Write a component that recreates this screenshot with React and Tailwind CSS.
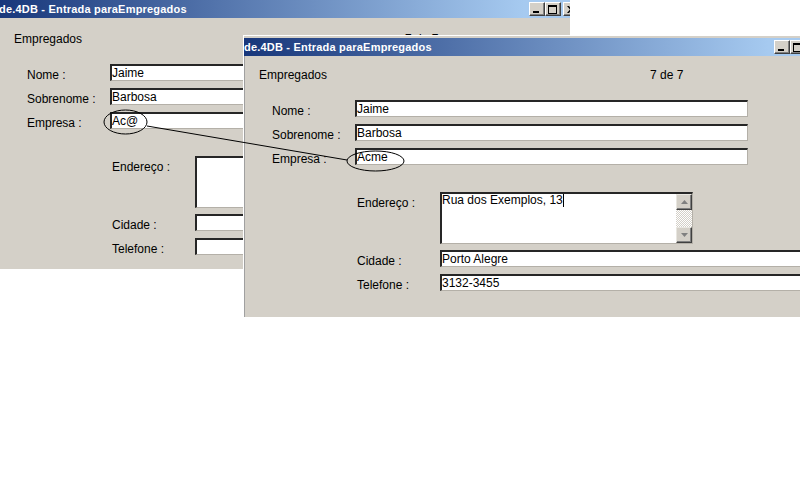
import React from "react";

const fieldBorder =
  "bg-white border-t-2 border-l-2 border-r border-b border-t-[#262626] border-l-[#262626] border-r-[#b4b0a8] border-b-[#b4b0a8]";

function Field({ className = "", children }) {
  return (
    <div className={`h-[17px] ${fieldBorder} ${className}`}>
      <div className="pt-px leading-[13px] whitespace-nowrap overflow-hidden">{children}</div>
    </div>
  );
}

function Row({ label, children, className = "" }) {
  return (
    <div className={`flex items-start h-[17px] ${className}`}>
      <span className="w-[83px] shrink-0 pt-[4px] leading-[14px] whitespace-nowrap">{label}</span>
      {children}
    </div>
  );
}

function TitleButton({ children, className = "" }) {
  return (
    <div
      className={`w-[16px] h-[14px] shrink-0 bg-[#d4d0c8] border border-t-white border-l-white border-r-[#404040] border-b-[#404040] shadow-[inset_-1px_-1px_0_#808080] flex ${className}`}
    >
      {children}
    </div>
  );
}

function TitleBar() {
  return (
    <div className="flex items-center h-[18px] pr-[3px] bg-[linear-gradient(90deg,#18377b_0%,#a6caf0_90%)]">
      <span className="text-[11px] leading-[13px] font-bold tracking-[0.2px] text-white whitespace-nowrap">
        de.4DB - Entrada paraEmpregados
      </span>
      <div className="ml-auto flex">
        <TitleButton className="items-end justify-start pl-[3px] pb-[2px]">
          <div className="w-[6px] h-[2px] bg-black" />
        </TitleButton>
        <TitleButton className="items-center justify-center">
          <div className="w-[9px] h-[9px] border border-black border-t-2 mr-px" />
        </TitleButton>
        <TitleButton className="ml-[2px] items-center justify-center">
          <svg width="8" height="7" viewBox="0 0 8 7">
            <path d="M0 0h2l2 2.5L6 0h2L5 3.5 8 7H6L4 4.5 2 7H0l3-3.5z" fill="#000" />
          </svg>
        </TitleButton>
      </div>
    </div>
  );
}

function ScrollButton({ up }) {
  return (
    <div className="w-[16px] h-[16px] shrink-0 bg-[#d4d0c8] border border-t-[#e8e6e0] border-l-[#e8e6e0] border-r-[#404040] border-b-[#404040] shadow-[inset_-1px_-1px_0_#808080] flex items-center justify-center">
      <svg width="7" height="4" viewBox="0 0 7 4">
        {up ? <path d="M3.5 0L7 4H0z" fill="#808080" /> : <path d="M0 0h7L3.5 4z" fill="#808080" />}
      </svg>
    </div>
  );
}

function TextArea({ text }) {
  return (
    <div className={`w-[253px] h-[52px] flex ${fieldBorder}`}>
      <div className="flex-1 leading-[12px] whitespace-nowrap overflow-hidden">
        {text}
        {text && <span className="inline-block w-px h-[13px] bg-black align-top" />}
      </div>
      {text && (
        <div className="w-[16px] flex flex-col">
          <ScrollButton up />
          <div className="flex-1 bg-[repeating-conic-gradient(#d4d0c8_0_25%,#ffffff_0_50%)] bg-[length:2px_2px]" />
          <ScrollButton />
        </div>
      )}
    </div>
  );
}

function Form({ pt, data }) {
  return (
    <div className={`flex-1 border-l border-[#a0a0a0] ${pt}`}>
      <div className="flex pl-[14px] leading-[14px]">
        <span className="w-[391px]">Empregados</span>
        <span>7 de 7</span>
      </div>

      <div className="mt-[18px] pl-[27px] flex flex-col gap-[7px]">
        <Row label="Nome :">
          <Field className="w-[393px]">{data.nome}</Field>
        </Row>
        <Row label="Sobrenome :">
          <Field className="w-[393px]">{data.sobrenome}</Field>
        </Row>
        <Row label="Empresa :">
          <Field className="w-[393px]">{data.empresa}</Field>
        </Row>
      </div>

      <div className="mt-[27px] pl-[112px] flex flex-col">
        <div className="flex items-start">
          <span className="w-[83px] shrink-0 pt-[4px] leading-[14px]">Endereço :</span>
          <TextArea text={data.endereco} />
        </div>
        <Row label="Cidade :" className="mt-[6px]">
          <Field className="w-[393px]">{data.cidade}</Field>
        </Row>
        <Row label="Telefone :" className="mt-[7px]">
          <Field className="w-[393px]">{data.telefone}</Field>
        </Row>
      </div>
    </div>
  );
}

export default function App() {
  return (
    <div className="relative w-[800px] h-[500px] overflow-hidden bg-white text-black text-[12px] font-['Liberation_Sans',Arial,sans-serif]">
      {/* janela de trás */}
      <div className="absolute left-0 top-0 w-[570px] h-[269px] overflow-hidden">
        <div className="ml-[-2px] mt-[-3px] w-[584px] h-[272px] flex flex-col bg-[#d4d0c8] border-t border-l border-white pt-[2px]">
          <TitleBar />
          <Form
            pt="pt-[14px]"
            data={{ nome: "Jaime", sobrenome: "Barbosa", empresa: "Ac@", endereco: "", cidade: "", telefone: "" }}
          />
        </div>
      </div>

      {/* janela da frente */}
      <div className="absolute left-[243px] top-[35px] w-[584px] h-[282px] flex flex-col bg-[#d4d0c8] border-t border-l border-white pt-[2px]">
        <TitleBar />
        <Form
          pt="pt-[12px]"
          data={{
            nome: "Jaime",
            sobrenome: "Barbosa",
            empresa: "Acme",
            endereco: "Rua dos Exemplos, 13",
            cidade: "Porto Alegre",
            telefone: "3132-3455",
          }}
        />
      </div>

      {/* anotações */}
      <svg className="absolute inset-0 pointer-events-none" width="800" height="500" viewBox="0 0 800 500">
        <ellipse cx="125.5" cy="122" rx="21.5" ry="12" fill="none" stroke="#000" strokeWidth="1" />
        <ellipse cx="375.5" cy="161" rx="28.5" ry="10" fill="none" stroke="#000" strokeWidth="1" />
        <line x1="147" y1="126" x2="347" y2="160" stroke="#000" strokeWidth="1" />
      </svg>
    </div>
  );
}
